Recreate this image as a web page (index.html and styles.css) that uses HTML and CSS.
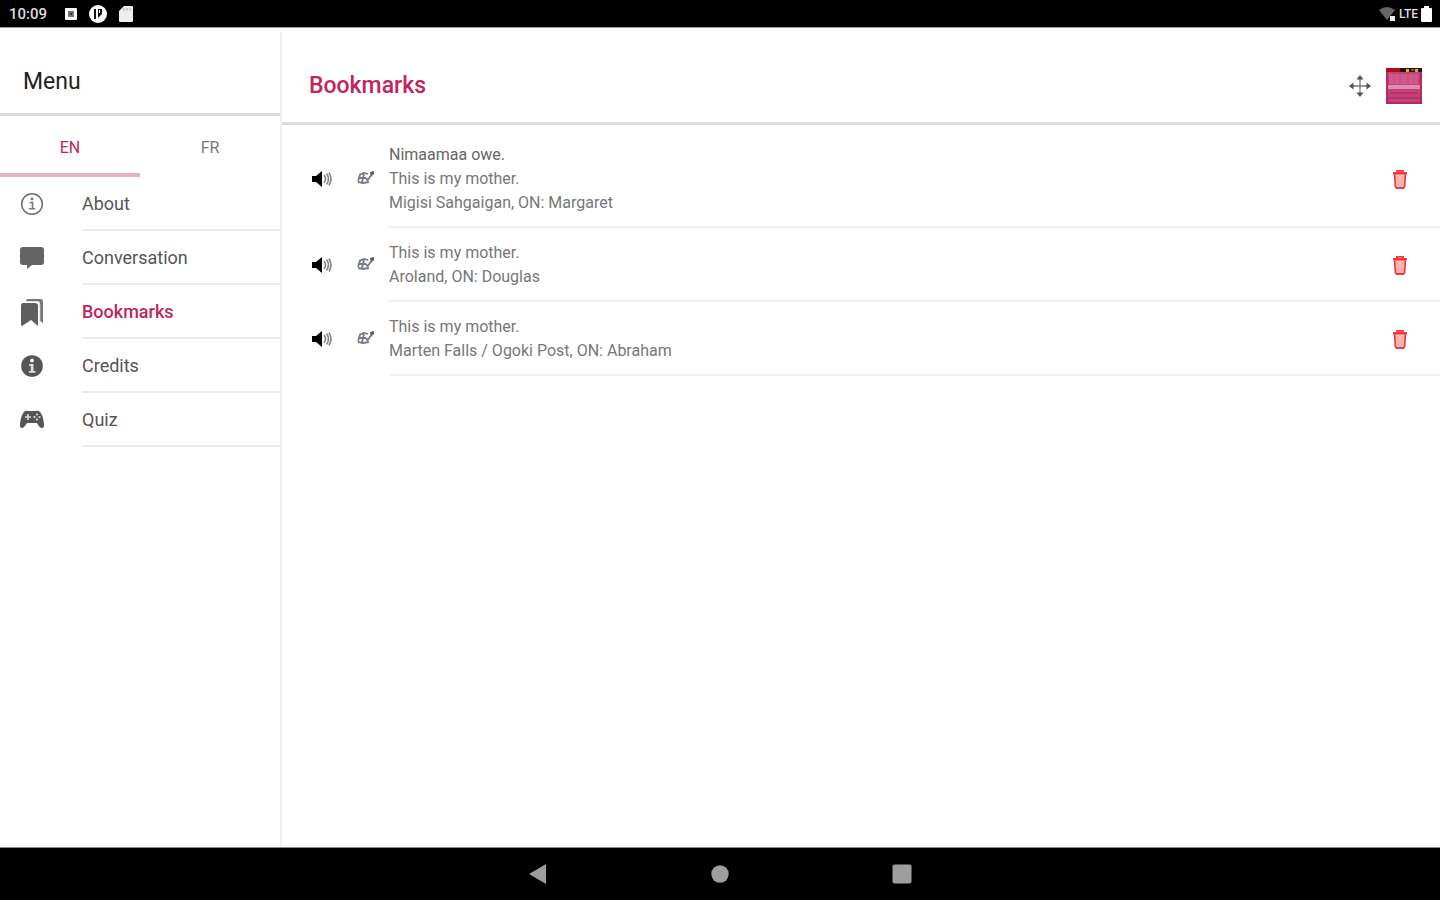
FILE: index.html
```html
<!DOCTYPE html>
<html lang="en">
<head>
<meta charset="utf-8">
<title>Bookmarks</title>
<link rel="stylesheet" href="styles.css">
</head>
<body>
<svg class="defs" aria-hidden="true">
  <symbol id="speaker" viewBox="0 0 22 16">
    <path d="M1 5h4l6-5v16l-6-5H1z"/>
    <path d="M13 4q3 4 0 8M15.500 2.500q4 5.500 0 11M18 1.500q4 6.500 0 13" fill="none" stroke="#8a8a8a" stroke-width="1.700"/>
  </symbol>
  <symbol id="edit" viewBox="0 0 18 14">
    <path d="M2 4l5-2 4 1M1 7h8M1 11l5 1 6-1M3 4L1 10M7 3L5 11M10 10l6-8M9 7l2 3" fill="none" stroke="#777c88" stroke-width="1.800"/>
    <path d="M13 1l4-1v3l-3 2z" fill="#555b66"/>
  </symbol>
  <symbol id="trash" viewBox="0 0 16 20">
    <path d="M2.500 4.500L3.500 18q.1 1 1 1h7q.9 0 1-1l1-13.500z" fill="#ffb9b9" stroke="#f33b3b" stroke-width="1.800"/>
    <path d="M1 4h14M5 3.500V1.800h6v1.700" fill="none" stroke="#f33b3b" stroke-width="1.800"/>
    <path d="M6 7l.4 9M10 7l-.4 9" stroke="#f99" stroke-width="1"/>
  </symbol>
</svg>
<div class="screen">
  <header class="status">
    <div class="status-group">
      <span class="clock">10:09</span>
      <svg class="s-box" viewBox="0 0 12 14"><rect y="1" width="12" height="12" rx="1" fill="#fff"/><rect x="3" y="4" width="6" height="6" fill="#777"/><rect x="5" y="6" width="2" height="2" fill="#333"/></svg>
      <svg class="s-round" viewBox="0 0 18 18"><circle cx="9" cy="9" r="9" fill="#fff"/><path d="M5 4h2v10H5zM9 4h4v5l-4 4z" fill="#111"/><path d="M10 5h1v3h-1z" fill="#fff"/></svg>
      <svg class="s-card" viewBox="0 0 14 16"><path d="M5 0h8q1 0 1 1v14q0 1-1 1H1q-1 0-1-1V5z" fill="#eee"/><path d="M5 2v3M8 2v3M11 2v3" stroke="#aaa"/></svg>
    </div>
    <div class="status-group right">
      <svg class="s-wifi" viewBox="0 0 17 14"><path d="M0 3q8-6 16 0L8 13z" fill="#666"/><path d="M11 9h5v5h-5z" fill="#eee"/></svg>
      <span class="lte">LTE</span>
      <svg class="s-batt" viewBox="0 0 11 16"><path d="M3 0h5v2h2q1 0 1 1v12q0 1-1 1H1q-1 0-1-1V3q0-1 1-1h2z" fill="#fff"/></svg>
    </div>
  </header>
  <div class="body">
    <aside class="side">
      <h2 class="side-title">Menu</h2>
      <div class="tabs">
        <button class="tab active" type="button">EN</button>
        <button class="tab" type="button">FR</button>
      </div>
      <nav class="menu">
        <a class="item" href="#about">
          <svg class="m-icon" viewBox="0 0 26 26"><circle cx="13" cy="13" r="10.300" fill="none" stroke="#6d6d6d" stroke-width="1.500"/><circle cx="13" cy="8" r="1.400" fill="#777"/><path d="M10.500 11.500h3v6M10 17.800h6" fill="none" stroke="#777" stroke-width="1.600"/></svg>
          <span class="label">About</span></a>
        <a class="item" href="#conversation">
          <svg class="m-icon" viewBox="0 0 26 26"><path d="M4 2h18q3 0 3 3v12q0 3-3 3H13l-5 4v-4H4q-3 0-3-3V5q0-3 3-3z" fill="#646464"/></svg>
          <span class="label">Conversation</span></a>
        <a class="item current" href="#bookmarks">
          <svg class="m-icon tall" viewBox="0 0 26 28"><path d="M7 3q0-2 2-2h12q3 0 3 3v21l-3-2V6q0-3-3-3z" fill="#777"/><path d="M4 5h12q3 0 3 3v20l-7-6-9 6-1-1V8q0-3 2-3z" fill="#5f5f5f"/><path d="M7 3.500h11q2.800 0 2.800 3V24" fill="none" stroke="#ddd" stroke-width="1"/></svg>
          <span class="label">Bookmarks</span></a>
        <a class="item" href="#credits">
          <svg class="m-icon" viewBox="0 0 26 26"><circle cx="13" cy="13" r="10.800" fill="#555"/><circle cx="13" cy="7.500" r="2" fill="#eee"/><path d="M10 11h4.500v7h2v1.800H9.800V18h2v-5.200H10z" fill="#ddd"/></svg>
          <span class="label">Credits</span></a>
        <a class="item" href="#quiz">
          <svg class="m-icon" viewBox="0 0 26 26"><path d="M5 5q2-2 5-1h6q3-1 5 1 3 3 4 12 .5 4-2 4t-5-5H8q-3 5-5 5-2.500 0-2-4Q2 8 5 5z" fill="#555"/><path d="M9 7v6M6 10h6" stroke="#ddd" stroke-width="1.600"/><g fill="#ddd"><circle cx="18" cy="7.500" r="1.100"/><circle cx="18" cy="12.500" r="1.100"/><circle cx="15.500" cy="10" r="1.100"/><circle cx="20.500" cy="10" r="1.100"/></g></svg>
          <span class="label">Quiz</span></a>
      </nav>
    </aside>
    <main class="main">
      <div class="bar">
        <h1 class="title">Bookmarks</h1>
        <button class="plain" type="button" aria-label="Move"><svg class="move" viewBox="0 0 22 22"><path d="M11 2v18M2 11h18" stroke="#777" stroke-width="1.300"/><path d="M11 0l3.500 4.500h-7zM11 22l3.500-4.500h-7zM0 11l4.500-3.500v7zM22 11l-4.500-3.500v7z" fill="#555"/></svg></button>
        <svg class="cover" viewBox="0 0 36 36" role="img" aria-label="Cover"><rect width="36" height="36" fill="#c4417a"/><path d="M0 0h2v36H0zM34 4h2v32h-2zM0 34h36v2H0z" fill="#b02c60"/><path d="M0 0h14v4H0z" fill="#ad101c"/><path d="M14 0h22v4H14z" fill="#291317"/><path d="M20 1h3v3h-3zM29 1h3v3h-3z" fill="#d4b02f"/><path d="M25 1h3v2h-3z" fill="#a34a22"/><path d="M3 6h29v10H3z" fill="#d0588b"/><path d="M2 17h32v4H2z" fill="#e08cae"/><path d="M8 6v10M14 5v11M22 5v11M28 6v10" stroke="#c54a80"/><path d="M4 25h28M3 30h30" stroke="#b23468" stroke-width="2"/></svg>
      </div>
      <ul class="list">
        <li class="row">
          <button class="plain play" type="button" aria-label="Play"><svg class="speaker"><use href="#speaker"/></svg></button>
          <button class="plain note" type="button" aria-label="Edit"><svg class="edit"><use href="#edit"/></svg></button>
          <div class="entry">
            <div class="text"><p class="phrase">Nimaamaa owe.</p><p>This is my mother.</p><p>Migisi Sahgaigan, ON: Margaret</p></div>
            <button class="plain" type="button" aria-label="Delete"><svg class="trash"><use href="#trash"/></svg></button>
          </div>
        </li>
        <li class="row">
          <button class="plain play" type="button" aria-label="Play"><svg class="speaker"><use href="#speaker"/></svg></button>
          <button class="plain note" type="button" aria-label="Edit"><svg class="edit"><use href="#edit"/></svg></button>
          <div class="entry">
            <div class="text"><p>This is my mother.</p><p>Aroland, ON: Douglas</p></div>
            <button class="plain" type="button" aria-label="Delete"><svg class="trash"><use href="#trash"/></svg></button>
          </div>
        </li>
        <li class="row">
          <button class="plain play" type="button" aria-label="Play"><svg class="speaker"><use href="#speaker"/></svg></button>
          <button class="plain note" type="button" aria-label="Edit"><svg class="edit"><use href="#edit"/></svg></button>
          <div class="entry">
            <div class="text"><p>This is my mother.</p><p>Marten Falls / Ogoki Post, ON: Abraham</p></div>
            <button class="plain" type="button" aria-label="Delete"><svg class="trash"><use href="#trash"/></svg></button>
          </div>
        </li>
      </ul>
    </main>
  </div>
  <footer class="nav">
    <button class="plain" type="button" aria-label="Back"><svg class="n-icon" viewBox="0 0 20 20"><path d="M1 10L18 0v20z" fill="#9e9e9e"/></svg></button>
    <button class="plain" type="button" aria-label="Home"><svg class="n-icon" viewBox="0 0 20 20"><circle cx="10" cy="10" r="8.700" fill="#9e9e9e"/></svg></button>
    <button class="plain" type="button" aria-label="Recent apps"><svg class="n-icon" viewBox="0 0 20 20"><rect x=".5" y=".5" width="19" height="19" rx="2" fill="#9e9e9e"/></svg></button>
  </footer>
</div>
</body>
</html>
```
FILE: styles.css
```css
* { box-sizing: border-box; }
body { margin: 0; font-family: Roboto, "Liberation Sans", sans-serif; background: #fff; color: #555; }
h1, h2, p, ul { margin: 0; padding: 0; }
svg { display: block; }
.defs { position: absolute; width: 0; height: 0; }
.plain { padding: 0; border: 0; background: none; display: flex; justify-content: center; align-items: center; }

.screen { min-height: 100vh; display: flex; flex-direction: column; }

.status { height: 28px; background: #000; border-bottom: 1px solid #999; display: flex; justify-content: space-between; align-items: center; padding: 0 8px 0 9px; color: #ddd; }
.status-group { display: flex; align-items: center; }
.clock { font-size: 15px; font-weight: 500; width: 56px; }
.s-box { width: 12px; height: 14px; }
.s-round { width: 18px; height: 18px; margin: 0 12px; }
.s-card { width: 14px; height: 16px; }
.right { gap: 3px; }
.s-wifi { width: 17px; height: 14px; }
.lte { font-size: 12px; font-weight: 500; }
.s-batt { width: 11px; height: 16px; }

.body { flex: 1; display: flex; padding-top: 4px; }
.side { flex: 0 0 282px; border-right: 2px solid #f0f0f0; }
.side-title { height: 84px; padding: 34px 23px 0; border-bottom: 3px solid #dadada; font-size: 23px; line-height: 32px; font-weight: 400; color: #222; }
.tabs { display: flex; }
.tab { flex: 1; height: 61px; padding: 6px 0 0; border: 0; border-bottom: 4px solid transparent; background: none; font: 400 16px/24px Roboto, sans-serif; color: #777; }
.tab.active { color: #c2255c; border-color: #e3b3c2; }
.item { display: flex; align-items: center; height: 54px; padding-left: 19px; text-decoration: none; color: #555; }
.m-icon { flex: none; width: 26px; height: 26px; }
.m-icon.tall { height: 28px; }
.label { flex: 1; align-self: stretch; margin-left: 37px; border-bottom: 2px solid #ececec; font-size: 18px; line-height: 54px; }
.current { color: #c2255c; font-weight: 500; }

.main { flex: 1; min-width: 0; }
.bar { height: 93px; padding: 18px 18px 0 27px; border-bottom: 3px solid #dcdcdc; display: flex; align-items: center; }
.title { flex: 1; font-size: 23px; line-height: 32px; font-weight: 500; color: #c2255c; }
.move { width: 22px; height: 22px; }
.cover { width: 36px; height: 36px; margin-left: 15px; }
.list { list-style: none; padding-top: 5px; }
.row { display: flex; align-items: center; padding-left: 29px; font-size: 16px; line-height: 24px; color: #777; }
.play { width: 22px; }
.note { width: 18px; margin: 0 14px 2px 24px; }
.entry { flex: 1; display: flex; align-items: center; padding: 13px 32px 11px 0; border-bottom: 2px solid #f0f0f0; }
.text { flex: 1; }
.phrase { color: #666; }
.speaker { width: 22px; height: 16px; }
.edit { width: 18px; height: 14px; }
.trash { width: 16px; height: 20px; }

.nav { height: 53px; background: #000; border-top: 1px solid #888; display: flex; justify-content: center; align-items: center; gap: 162px; }
.n-icon { width: 20px; height: 20px; }
```
